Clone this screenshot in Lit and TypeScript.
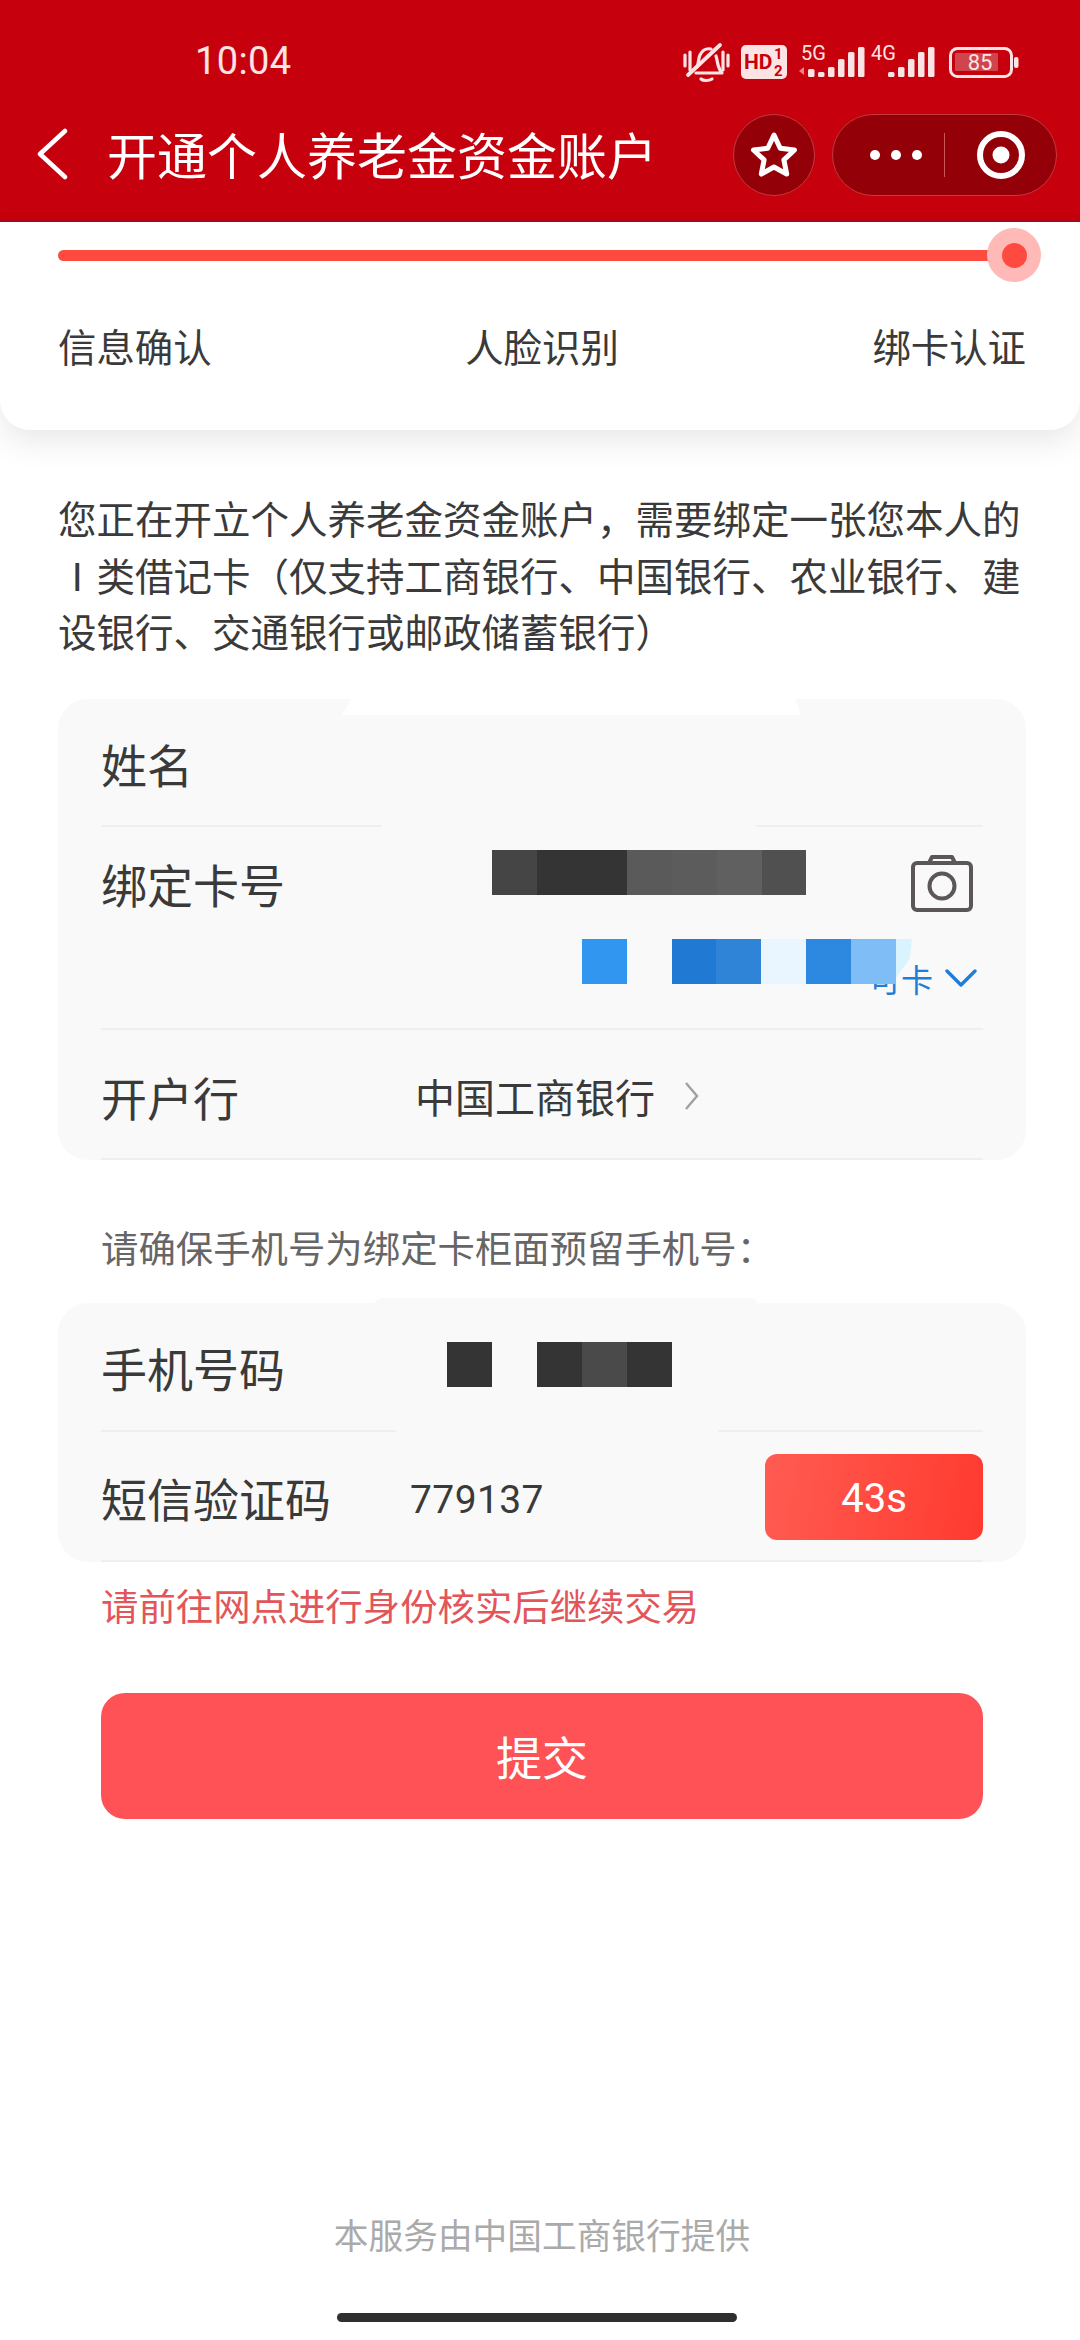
import { LitElement, html, css, svg } from "lit";
import { customElement } from "lit/decorators.js";

type Cell = { w: number; c: string };
const cardMosaic: Cell[] = [
  { w: 45, c: "#454545" }, { w: 90, c: "#343434" }, { w: 45, c: "#5a5a5a" },
  { w: 45, c: "#5c5c5c" }, { w: 45, c: "#606060" }, { w: 44, c: "#505050" },
];
const blueMosaic: Cell[] = [
  { w: 45, c: "#3096f0" }, { w: 45, c: "transparent" }, { w: 44, c: "#2079d2" },
  { w: 45, c: "#2f84d8" }, { w: 45, c: "#eaf6ff" }, { w: 45, c: "#2d88e0" }, { w: 45, c: "#7fbdf7" },
];
const phoneMosaic: Cell[] = [
  { w: 45, c: "#343434" }, { w: 45, c: "transparent" }, { w: 45, c: "#343434" },
  { w: 45, c: "#4a4a4a" }, { w: 45, c: "#343434" },
];

const ink = "#fde4e4";
const bars = (x0: number, hs: number[]) =>
  hs.map((h, i) => svg`<rect x=${x0 + i * 10} y=${37 - h} width="6.5" height=${h} rx="1.5" fill=${ink}></rect>`);

@customElement("app-root")
export class AppRoot extends LitElement {
  static styles = css`
    :host { display: block; width: 1080px; height: 2340px; background: #fff; overflow: hidden;
      font-family: "Noto Sans CJK SC", "Noto Sans", sans-serif; color: #3a3a3a; font-weight: 400; position: relative; }
    * { box-sizing: border-box; }
    .top { background: #c6000d; height: 222px; color: #fff; border-bottom: 2px solid #a80a18; }
    .status { height: 110px; display: flex; align-items: flex-start; padding: 38px 0 0 195px; }
    .time { font: 400 38px/46px Roboto, sans-serif; color: #fde4e4; letter-spacing: .4px; }
    .status-icons { display: block; margin-left: auto; margin-top: 2px; margin-right: 60px; }
    .nav { display: flex; align-items: center; height: 90px; padding-left: 36px; }
    .back { width: 32px; height: 52px; margin-right: 39px; margin-top: -2px; }
    .title { font-size: 50px; line-height: 70px; color: #fff; flex: 1; margin-top: -5px; white-space: nowrap; }
    .star-btn { width: 82px; height: 82px; border-radius: 50%; background: #930007; border: 1px solid #c23a3e;
      display: flex; align-items: center; justify-content: center; margin-right: 17px; }
    .capsule { width: 225px; height: 82px; border-radius: 41px; background: #930007; border: 1px solid #c23a3e;
      display: flex; align-items: center; margin-right: 23px; }
    .dots { width: 111px; display: flex; justify-content: flex-end; gap: 10.5px; padding-right: 22px; }
    .dots i { width: 10.5px; height: 10.5px; border-radius: 50%; background: #fff; display: block; }
    .vline { width: 1px; height: 44px; background: #c9565a; }
    .target { flex: 1; display: flex; justify-content: center; }

    .steps { height: 208px; background: #fff; border-radius: 0 0 30px 30px; box-shadow: 0 12px 32px rgba(0,0,0,.09);
      padding: 0 54px 0 58px; position: relative; }
    .track { position: relative; height: 11px; width: 956px; background: #ff4a40; border-radius: 6px; top: 28px; }
    .knob { position: absolute; right: -27px; top: -22px; width: 54px; height: 54px; border-radius: 50%; background: #ffb9b6;
      display: flex; align-items: center; justify-content: center; }
    .knob i { display: block; width: 25px; height: 25px; border-radius: 50%; background: #ff4a40; }
    .step-labels { display: flex; justify-content: space-between; font-size: 38.4px; line-height: 56px; padding-top: 84px; }

    .intro { margin: 59px 58px 0; font-size: 38.5px; line-height: 56.5px; height: 170px; white-space: nowrap; }
    .card { position: relative; margin: 0 54px 0 58px; background: #f9f9f9; border-radius: 30px; padding: 0 43px; }
    .c1 { margin-top: 40px; height: 461px; }
    .c2 { height: 259px; }
    .row { position: relative; display: flex; border-bottom: 2px solid #efefef; font-size: 46px; line-height: 64px; }
    .label { flex: none; }
    .r-name { height: 128px; padding-top: 32px; }
    .r-card { height: 203px; padding-top: 24px; }
    .r-bank { height: 130px; padding-top: 34px; }
    .r-phone { height: 129px; padding-top: 32px; }
    .r-code { height: 130px; padding-top: 33px; }
    .bank { margin-left: 176px; font-size: 40px; display: flex; align-items: center; height: 64px; }
    .bank svg { margin-left: 29px; }
    .code { font: 400 39px/64px Roboto, sans-serif; margin: 3px 0 0 79px; letter-spacing: .4px; }
    .send { position: absolute; right: 0; top: 22px; width: 218px; height: 86px; border-radius: 12px;
      background: linear-gradient(100deg, #ff5c52, #ff3a2f); color: #fff; font: 400 40px/89px Roboto, sans-serif; text-align: center; }
    .mosaic { position: absolute; display: flex; height: 45px; }
    .mosaic i { display: block; height: 100%; }
    .m-card { left: 391px; top: 23px; }
    .m-blue { left: 481px; top: 112px; }
    .m-phone { left: 346px; top: 39px; }
    .pale { flex: none; background: #d9f3ff; clip-path: polygon(0 0, 100% 0, 85% 45%, 0 85%); }
    .camera { position: absolute; right: 7px; top: 27px; }
    .alt { position: absolute; right: 6px; top: 129px; display: flex; align-items: center; font-size: 32px; line-height: 44px; color: #1f7fd6; }
    .alt svg { margin-left: 12px; }
    .patch { position: absolute; background: #f9f9f9; height: 6px; bottom: -4px; }
    .notch { position: absolute; top: 0; left: 284px; width: 459px; height: 16px; background: #fff;
      clip-path: polygon(9px 0, 453px 0, 100% 100%, 0 100%); }
    .notch2 { position: absolute; top: -5px; left: 317px; width: 382px; height: 6px; background: #f9f9f9; border-radius: 6px 6px 0 0; }
    .hint { padding: 59px 0 0 101px; height: 143px; font-size: 37.4px; line-height: 56px; color: #666; white-space: nowrap; }
    .err { padding-left: 101px; margin-top: 15px; font-size: 37.4px; line-height: 56px; color: #e2565a; }
    .submit { margin: 60px 97px 0 101px; height: 126px; border-radius: 24px; background: #ff5257; color: #fff;
      font-size: 46px; text-align: center; line-height: 124px; }
    .foot { margin-top: 390px; padding-left: 4px; text-align: center; font-size: 34.7px; line-height: 50px; color: #aaa; }
    .home { width: 400px; height: 9px; border-radius: 5px; background: #2f2f2f; margin: 54px 0 0 337px; }
  `;

  private mosaic(cells: Cell[], cls: string, extra: unknown = "") {
    return html`<div class="mosaic ${cls}">${cells.map(
      (c) => html`<i style="width:${c.w}px;background:${c.c}"></i>`
    )}${extra}</div>`;
  }

  render() {
    return html`
      <div class="top">
        <div class="status">
          <div class="time">10:04</div>
          <svg class="status-icons" width="340" height="46" viewBox="680 40 340 46">
            <g fill="none" stroke=${ink} stroke-width="3.2" stroke-linecap="round" stroke-linejoin="round">
              <path d="M685 55v11M690 52v18M723 52v18M728 55v11" />
              <path d="M697 67c2-4 1-8 3-12 2-4 6-7 11-6M716 56c2 6 1 11 6 17H696" />
              <path d="M688 75 720 45" stroke-width="3.8" />
              <path d="M701 79c2 2 8 2 11 0" />
            </g>
            <rect x="741" y="45" width="46" height="34" rx="5" fill=${ink}></rect>
            <text x="744" y="69" font-family="Roboto, sans-serif" font-weight="700" font-size="21" fill="#c6000d">HD</text>
            <text x="774" y="59" font-family="Roboto, sans-serif" font-weight="700" font-size="15" fill="#c6000d">1</text>
            <text x="774" y="76" font-family="Roboto, sans-serif" font-weight="700" font-size="15" fill="#c6000d">2</text>

            <text x="801" y="60" font-family="Roboto, sans-serif" font-size="20" fill=${ink}>5G</text>
            <path d="M799 71l5-4v8z" fill="#f0808a"></path>
            <g transform="translate(0 40)">${bars(808, [8, 5, 10, 18, 25, 30])}</g>
            <text x="871" y="60" font-family="Roboto, sans-serif" font-size="20" fill=${ink}>4G</text>
            <g transform="translate(0 40)">${bars(888, [5, 10, 18, 25, 30])}</g>

            <rect x="950.5" y="48.5" width="61" height="28" rx="7" fill="none" stroke=${ink} stroke-width="3"></rect>
            <rect x="955" y="53" width="43" height="18" rx="1" fill="#d0454c"></rect>
            <text x="980" y="70" text-anchor="middle" font-family="Roboto, sans-serif" font-size="22" fill=${ink}>85</text>
            <rect x="1014" y="57" width="4.5" height="11" rx="2" fill=${ink}></rect>
          </svg>
        </div>
        <div class="nav">
          <svg class="back" viewBox="0 0 32 52" fill="none" stroke="#fff" stroke-width="4.5" stroke-linecap="round" stroke-linejoin="round"><path d="M29 3 4 26l25 23" /></svg>
          <div class="title">开通个人养老金资金账户</div>
          <div class="star-btn">
            <svg width="48" height="48" viewBox="0 0 48 48" fill="none" stroke="#fff" stroke-width="5" stroke-linejoin="round"><path d="M24 4l6.2 13.2 14.3 1.8-10.6 9.9 2.8 14.2L24 36l-12.7 7.1 2.8-14.2L3.5 19l14.3-1.8z" /></svg>
          </div>
          <div class="capsule">
            <div class="dots"><i></i><i></i><i></i></div>
            <div class="vline"></div>
            <div class="target">
              <svg width="50" height="50" viewBox="0 0 50 50"><circle cx="25" cy="25" r="21" fill="none" stroke="#fff" stroke-width="6"></circle><circle cx="25" cy="25" r="8.5" fill="#fff"></circle></svg>
            </div>
          </div>
        </div>
      </div>

      <section class="steps">
        <div class="track"><div class="knob"><i></i></div></div>
        <div class="step-labels"><span>信息确认</span><span>人脸识别</span><span>绑卡认证</span></div>
      </section>

      <p class="intro">您正在开立个人养老金资金账户，需要绑定一张您本人的<br />Ⅰ类借记卡（仅支持工商银行、中国银行、农业银行、建<br />设银行、交通银行或邮政储蓄银行）</p>

      <section class="card c1">
        <div class="notch"></div>
        <div class="row r-name"><span class="label">姓名</span><div class="patch" style="left:280px;width:375px"></div></div>
        <div class="row r-card">
          <span class="label">绑定卡号</span>
          ${this.mosaic(cardMosaic, "m-card")}
          <svg class="camera" width="66" height="60" viewBox="0 0 66 60" fill="none" stroke="#5c5757" stroke-width="4" stroke-linejoin="round">
            <rect x="3" y="9" width="58" height="47" rx="4"></rect>
            <path d="M19 9l3-6h20l3 6" />
            <circle cx="32" cy="32" r="12.5"></circle>
          </svg>
          <div class="alt"><span>可卡</span>
            <svg width="32" height="20" viewBox="0 0 32 20" fill="none" stroke="#1f7fd6" stroke-width="3.4" stroke-linecap="round" stroke-linejoin="round"><path d="M2 3l14 14L30 3" /></svg>
          </div>
          ${this.mosaic(blueMosaic, "m-blue", html`<i class="pale" style="width:16px"></i>`)}
        </div>
        <div class="row r-bank">
          <span class="label">开户行</span>
          <div class="bank">中国工商银行
            <svg width="16" height="30" viewBox="0 0 16 30" fill="none" stroke="#a0a0a0" stroke-width="2.4"><path d="M2 2l11 13L2 28" /></svg>
          </div>
        </div>
      </section>

      <div class="hint">请确保手机号为绑定卡柜面预留手机号：</div>

      <section class="card c2">
        <div class="notch2"></div>
        <div class="row r-phone"><span class="label">手机号码</span>
          ${this.mosaic(phoneMosaic, "m-phone")}
          <div class="patch" style="left:295px;width:322px"></div>
        </div>
        <div class="row r-code">
          <span class="label">短信验证码</span>
          <span class="code">779137</span>
          <div class="send">43s</div>
        </div>
      </section>

      <div class="err">请前往网点进行身份核实后继续交易</div>
      <div class="submit">提交</div>
      <div class="foot">本服务由中国工商银行提供</div>
      <div class="home"></div>
    `;
  }
}
